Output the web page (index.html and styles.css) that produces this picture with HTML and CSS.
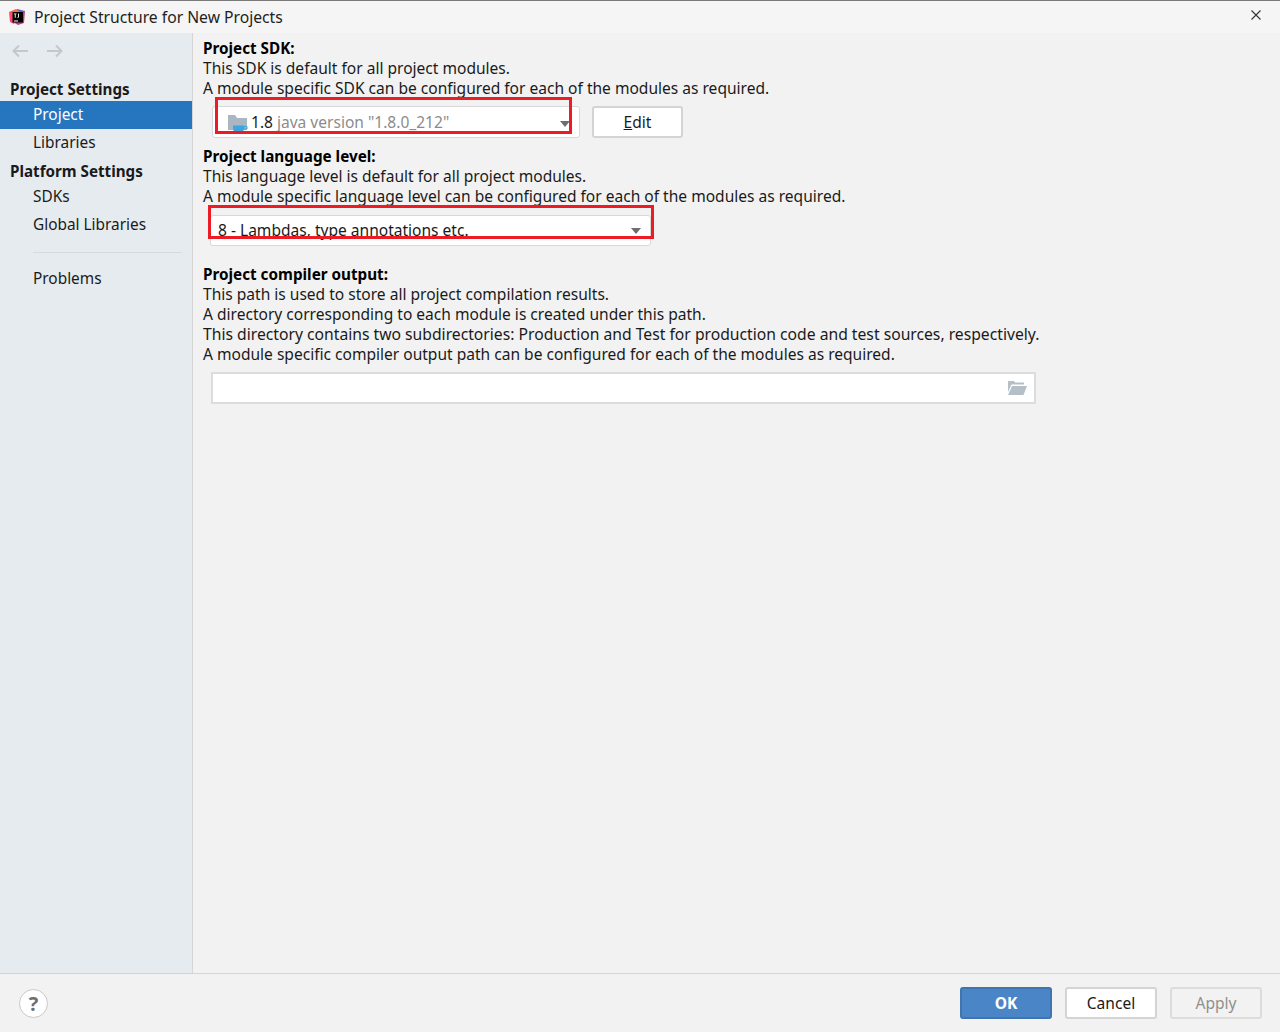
FILE: index.html
```html
<!DOCTYPE html>
<html lang="en">
<head>
<meta charset="utf-8">
<title>Project Structure for New Projects</title>
<link rel="stylesheet" href="styles.css">
</head>
<body>
<div class="dialog">
  <header class="titlebar">
    <svg class="app-icon" width="16" height="16" viewBox="0 0 16 16">
      <defs>
        <linearGradient id="g1" x1="0" y1="1" x2="1" y2="0"><stop offset="0" stop-color="#ff318c"/><stop offset="1" stop-color="#fc801d"/></linearGradient>
        <linearGradient id="g2" x1="0" y1="0" x2="1" y2="1"><stop offset="0" stop-color="#087cfa"/><stop offset="1" stop-color="#fe2857"/></linearGradient>
      </defs>
      <path d="M8 0l8 2-1 12-6 2-5-3z" fill="url(#g2)"/>
      <path d="M0 3 7 0l4 3-6 12-4-2z" fill="url(#g1)"/>
      <rect x="3.500" y="3" width="10.500" height="10.500" fill="#000"/>
      <rect x="5" y="11.500" width="4" height="1" fill="#fff"/>
      <path d="M5 4.500h2.500v.7h-.8v3.600h-.9v-3.600h-.8zM9 4.500h.9v3.300c0 .8-.6 1.100-1.500 1v-.7c.4 0 .6-.1.600-.4z" fill="#fff"/>
    </svg>
    <span class="title">Project Structure for New Projects</span>
    <svg class="close" width="10" height="10" viewBox="0 0 10 10"><path d="M.5.500l9 9M9.500.500l-9 9" stroke="#333" stroke-width="1.100" fill="none"/></svg>
  </header>
  <div class="main">
    <nav class="sidebar">
      <div class="history">
        <svg width="18" height="14" viewBox="0 0 18 14"><path d="M17 7H2.500M8 1.500 2.500 7 8 12.500" stroke="#c4c8cc" stroke-width="2" fill="none"/></svg>
        <svg width="18" height="14" viewBox="0 0 18 14"><path d="M1 7h14.500M10 1.500 15.500 7 10 12.500" stroke="#c4c8cc" stroke-width="2" fill="none"/></svg>
      </div>
      <div class="nav-head first">Project Settings</div>
      <div class="nav-item active">Project</div>
      <div class="nav-item">Libraries</div>
      <div class="nav-head second">Platform Settings</div>
      <div class="nav-item">SDKs</div>
      <div class="nav-item">Global Libraries</div>
      <div class="nav-sep"></div>
      <div class="nav-item">Problems</div>
    </nav>
    <section class="content">
      <h2 class="label">Project SDK:</h2>
      <p class="line">This SDK is default for all project modules.</p>
      <p class="line">A module specific SDK can be configured for each of the modules as required.</p>
      <div class="sdk-row">
        <div class="combo sdk-combo">
          <svg class="jdk-icon" width="20" height="20" viewBox="0 0 20 20">
            <path d="M0 1h7l2 3h10v12H0z" fill="#aab7c2"/>
            <path d="M5 11.500h11v3a3.500 3.500 0 0 1-3.500 3.500h-4A3.500 3.500 0 0 1 5 14.500z" fill="#3fa6dc"/>
            <path d="M16 12.500h3v2.500h-3z" fill="none" stroke="#3fa6dc" stroke-width="1"/>
          </svg>
          <span class="combo-text">1.8</span>
          <span class="combo-muted">java version "1.8.0_212"</span>
          <span class="arrow"></span>
        </div>
        <button class="btn edit-btn"><u>E</u>dit</button>
      </div>
      <h2 class="label">Project language level:</h2>
      <p class="line">This language level is default for all project modules.</p>
      <p class="line">A module specific language level can be configured for each of the modules as required.</p>
      <div class="combo lang-combo">
        <span class="combo-text">8 - Lambdas, type annotations etc.</span>
        <span class="arrow"></span>
      </div>
      <h2 class="label">Project compiler output:</h2>
      <p class="line">This path is used to store all project compilation results.</p>
      <p class="line">A directory corresponding to each module is created under this path.</p>
      <p class="line wide">This directory contains two subdirectories: Production and Test for production code and test sources, respectively.</p>
      <p class="line">A module specific compiler output path can be configured for each of the modules as required.</p>
      <div class="path-field">
        <svg width="19" height="14" viewBox="0 0 19 14"><path d="M0 0h6l1 1.500h9V3.500H3.500L0 11z" fill="#b4bfc8"/><path d="M4 5h15l-3.500 9H0z" fill="#b4bfc8"/></svg>
      </div>
      <div class="redbox redbox-sdk"></div>
      <div class="redbox redbox-lang"></div>
    </section>
  </div>
  <footer class="footer">
    <div class="help">?</div>
    <div class="actions">
      <button class="btn primary">OK</button>
      <button class="btn">Cancel</button>
      <button class="btn disabled">Apply</button>
    </div>
  </footer>
</div>
</body>
</html>
```

FILE: styles.css
```css
* { box-sizing: border-box; }
html, body { margin: 0; padding: 0; }
body {
  width: 1280px;
  height: 1032px;
  overflow: hidden;
  font-family: "Noto Sans", "Open Sans", sans-serif;
  font-size: 15.55px;
  color: #1a1a1a;
  background: #f2f2f2;
}
.dialog { display: flex; flex-direction: column; height: 1032px; border-top: 1px solid #7a7a7a; }
.titlebar { height: 32px; flex: none; display: flex; align-items: center; padding: 0 19px 0 9px; background: #f5f5f5; }
.app-icon { flex: none; margin-right: 9px; }
.title { line-height: 32px; color: #1f1f1f; font-size: 15.7px; }
.close { margin-left: auto; margin-top: -4px; }
.main { flex: 1; display: flex; min-height: 0; }
.sidebar { width: 193px; flex: none; background: #e6ebf0; border-right: 1px solid #d4d4d4; font-size: 15.4px; }
.history { height: 34px; display: flex; align-items: center; gap: 17px; padding: 2px 0 0 11px; }
.nav-head { font-weight: 700; font-size: 15.2px; padding-left: 10px; }
.nav-head.first { margin-top: 9px; height: 25px; line-height: 27px; }
.nav-head.second { height: 26px; line-height: 28px; }
.nav-item { height: 28px; line-height: 27px; padding-left: 33px; }
.nav-item.active { background: #2675bf; color: #fff; }
.nav-sep { height: 1px; background: #d6dade; margin: 13px 10px 12px 33px; }
.content { flex: 1; position: relative; padding: 5px 0 0 10px; }
.label { margin: 0; font-size: 15.25px; font-weight: 700; line-height: 20px; color: #000; }
.line { margin: 0; line-height: 20px; }
.line.wide { font-size: 15.7px; }
.sdk-row { display: flex; gap: 12px; margin: 8px 0 8px 9px; height: 32px; }
.combo { position: relative; display: flex; align-items: center; height: 32px; background: #fff; border: 1px solid #d8d8d8; border-radius: 3px; }
.sdk-combo { width: 368px; padding-left: 15px; }
.lang-combo { width: 441px; height: 31px; margin: 9px 0 18px 7px; padding: 0 0 2px 7px; }
.combo-text { color: #1a1a1a; }
.combo-muted { color: #8c8c8c; margin-left: 4px; }
.jdk-icon { flex: none; margin-right: 3px; margin-top: 3px; }
.arrow { position: absolute; right: 9px; top: 14px; width: 0; height: 0; border-left: 5.500px solid transparent; border-right: 5.500px solid transparent; border-top: 6px solid #6e6e6e; }
.lang-combo .arrow { top: 12px; }
.btn { width: 92px; height: 32px; padding: 0; font: inherit; color: #1a1a1a; background: #fff; border: 2px solid #d4d4d4; border-radius: 3px; }
.edit-btn { width: 91px; }
.path-field { width: 825px; height: 32px; margin: 8px 0 0 8px; display: flex; align-items: center; justify-content: flex-end; padding-right: 7px; background: #fff; border: 2px solid #dcdcdc; }
.redbox { position: absolute; border: 3px solid #ed1c24; pointer-events: none; }
.redbox-sdk { left: 22px; top: 64px; width: 357px; height: 37px; }
.redbox-lang { left: 15px; top: 172px; width: 446px; height: 34px; }
.footer { height: 59px; flex: none; display: flex; align-items: center; justify-content: space-between; padding: 0 18px 0 19px; border-top: 1px solid #d4d4d4; background: #f2f2f2; }
.help { width: 29px; height: 29px; border-radius: 50%; background: #fff; border: 1px solid #c8c8c8; display: flex; align-items: center; justify-content: center; font-weight: 700; font-size: 20px; color: #6e6e6e; }
.actions { display: flex; gap: 13px; }
.primary { background: #4a86c7; border-color: #3f74ad; color: #fff; font-weight: 700; }
.disabled { background: #f2f2f2; color: #8f8f8f; border-color: #dcdcdc; }
```
